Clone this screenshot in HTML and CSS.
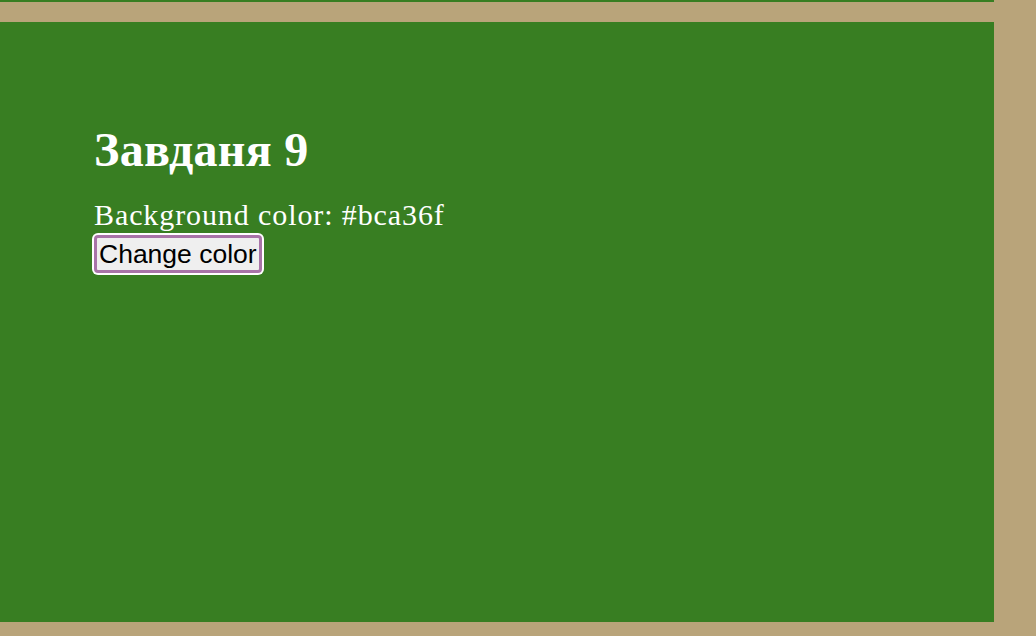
FILE: index.html
```html
<!DOCTYPE html>
<html lang="uk">
<head>
<meta charset="utf-8">
<title>Завданя 9</title>
<link rel="stylesheet" href="styles.css">
</head>
<body>
<div class="strip"></div>
<main class="panel">
  <h1 class="title">Завданя 9</h1>
  <p class="info">Background color: #bca36f</p>
  <button class="btn" type="button">Change color</button>
</main>
</body>
</html>
```
FILE: styles.css
```css
html, body {
  margin: 0;
  padding: 0;
}
body {
  background: #b9a47a;
  width: 1036px;
  height: 636px;
  overflow: hidden;
}
.strip {
  width: 994px;
  height: 2px;
  background: #387e22;
}
.panel {
  display: flex;
  flex-direction: column;
  align-items: flex-start;
  box-sizing: border-box;
  width: 994px;
  height: 600px;
  margin-top: 20px;
  padding: 100px 0 0 94px;
  background: #387e22;
  color: #ffffff;
  font-family: "Liberation Serif", "Times New Roman", serif;
}
.title {
  margin: 0;
  font-size: 48px;
  font-weight: bold;
  line-height: 55px;
  letter-spacing: 0.3px;
}
.info {
  margin: 22px 0 0 0;
  font-size: 30px;
  line-height: 32px;
  letter-spacing: 0.9px;
}
.btn {
  margin: 4px 0 0 0;
  padding: 0 2px;
  height: 38px;
  font-family: "Liberation Sans", Arial, sans-serif;
  font-size: 26.5px;
  color: #000;
  background: #efefef;
  border: 3px solid #a874a8;
  border-radius: 4px;
  box-shadow: 0 0 0 2px #ffffff;
  line-height: 30px;
}
```
